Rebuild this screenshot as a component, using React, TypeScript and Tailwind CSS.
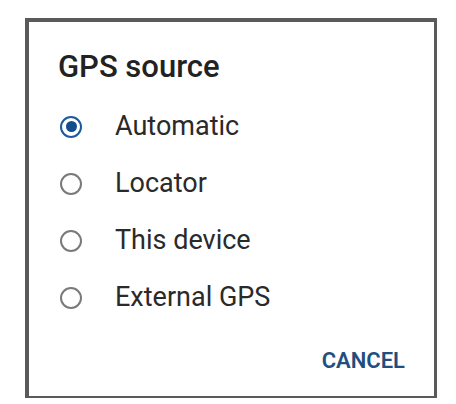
import { useState } from "react";

const options = ["Automatic", "Locator", "This device", "External GPS"];

function Radio({ checked }: { checked: boolean }) {
  return (
    <span
      className={
        checked
          ? "flex h-[22px] w-[22px] shrink-0 items-center justify-center rounded-full border-[2.5px] border-[#1c5a9c]"
          : "flex h-[22px] w-[22px] shrink-0 items-center justify-center rounded-full border-[2.5px] border-[#7a7a7a]"
      }
    >
      {checked && <span className="h-[11px] w-[11px] rounded-full bg-[#134d8c]" />}
    </span>
  );
}

export default function App() {
  const [selected, setSelected] = useState(0);

  return (
    <div className="h-[404px] w-[456px] overflow-hidden bg-white font-['Roboto',sans-serif]">
      <div className="ml-[25px] mt-[18px] flex h-[380px] w-[412px] flex-col border-t-4 border-b-2 border-l-4 border-r-[3px] border-[#5a5a5a] bg-white">
        <h2 className="pl-[29px] pt-[27px] text-[31px] font-medium leading-[36px] text-[#222]">GPS source</h2>
        <div className="mt-[13px] flex flex-col">
          {options.map((opt, i) => (
            <button
              key={opt}
              onClick={() => setSelected(i)}
              className="flex h-[57px] items-center pl-[31px] text-left"
            >
              <Radio checked={selected === i} />
              <span className="ml-[33px] text-[27px] leading-none text-[#2a2a2a]">{opt}</span>
            </button>
          ))}
        </div>
        <div className="mt-auto flex justify-end pb-[20px] pr-[29px]">
          <button className="text-[22px] font-semibold leading-[30px] text-[#1e4f7f]">CANCEL</button>
        </div>
      </div>
    </div>
  );
}
